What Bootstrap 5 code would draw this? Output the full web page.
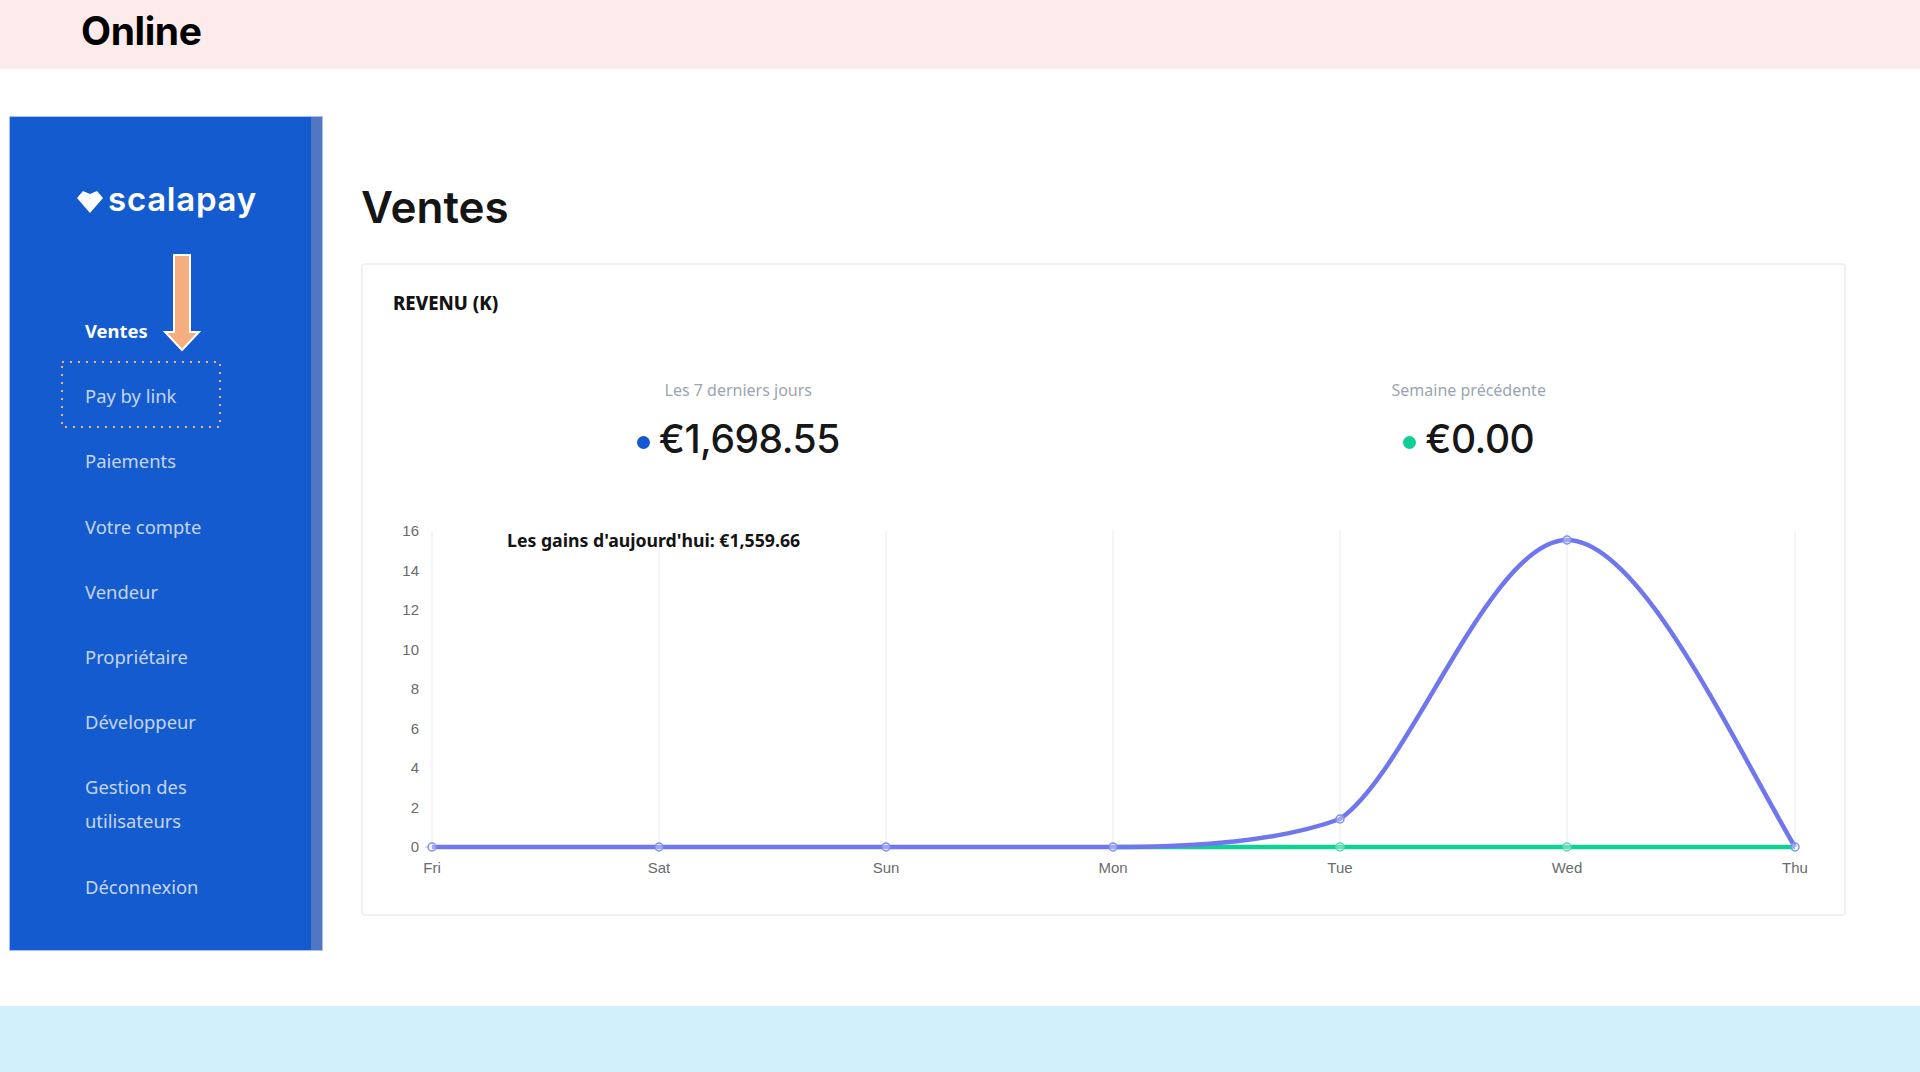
<!DOCTYPE html>
<html lang="fr">
<head>
  <meta charset="UTF-8">
  <title>Online - Ventes</title>
  <link href="https://cdn.jsdelivr.net/npm/bootstrap@5.3.0/dist/css/bootstrap.min.css" rel="stylesheet">
  <style>
    body { height: 1072px; overflow: hidden; background: #fff; font-family: "Noto Sans", sans-serif; }
    .top-strip { height: 69px; background: #fcebea; padding-left: 81px; font: 700 39px/62px Inter, sans-serif; color: #000; letter-spacing: -0.4px; }
    .bottom-strip { height: 66px; background: #d2f0fc; }
    .page-body { height: 937px; padding: 48px 0 0 10px; }

    .side-panel { position: relative; width: 312px; height: 833px; background: #155bd0; border-right: 11px solid #5277c2; outline: 1px solid #a9c3ee; }
    .brand { height: 182px; padding: 60px 0 0 67px; color: #fff; font: 600 33px/44px Inter, sans-serif; letter-spacing: 0.75px; }
    .brand svg { margin-right: 5px; vertical-align: -2px; }
    .side-nav { list-style: none; margin: 0; padding: 0 0 0 75px; }
    .side-nav a { display: block; padding: 15px 0 16.2px; color: #c6d6f3; font-size: 18.4px; line-height: 34px; text-decoration: none; white-space: nowrap; }
    .side-nav a.current { color: #fff; font-weight: 700; }
    .arrow-note { position: absolute; left: 153px; top: 137px; }
    .box-note { position: absolute; left: 51px; top: 244px; }

    .content-col { padding-left: 39px; width: 1522px; }
    .page-title { margin: 0; padding-top: 60px; height: 146px; font: 600 44px/60px Inter, sans-serif; color: #151515; }
    .chart-card { width: 1485px; height: 653px; border: 2px solid #eef1f5; border-radius: 4px; }
    .card-heading { padding: 24px 0 0 30px; height: 77px; font: 800 18.6px/28px "Noto Sans", sans-serif; color: #141414; }
    .stats-row { margin: 34px 10px 0; height: 140px; }
    .stat-label { color: #9aa5b1; font-size: 16px; line-height: 28px; }
    .stat-value { font: 500 39px/50px Inter, sans-serif; color: #171717; margin-top: 10px; letter-spacing: -0.5px; }
    .stat-dot { display: inline-block; width: 13px; height: 13px; border-radius: 50%; margin-right: 9px; vertical-align: 4px; }
    .dot-blue { background: #1358d2; }
    .dot-green { background: #0fcf97; }
    .chart-svg { display: block; flex-shrink: 0; }
    .chart-svg text { font-family: "Liberation Sans", Arial, sans-serif; font-size: 15px; fill: #6b6b6b; }
    .chart-svg .today-note { font-family: "Noto Sans", sans-serif; font-size: 17.7px; font-weight: 700; fill: #141414; }
  </style>
</head>
<body class="d-flex flex-column">

<div class="top-strip">Online</div>

<div class="page-body d-flex">
  <!-- Sidebar -->
  <aside class="side-panel flex-shrink-0">
    <div class="brand">
      <svg width="26" height="23" viewBox="0 0 26 23"><path d="M0 8 L6 1 L13 4 L20 1 L26 8 L13 23 Z" fill="#fff"/></svg>scalapay
    </div>
    <ul class="side-nav">
      <li><a class="current" href="#">Ventes</a></li>
      <li><a href="#">Pay by link</a></li>
      <li><a href="#">Paiements</a></li>
      <li><a href="#">Votre compte</a></li>
      <li><a href="#">Vendeur</a></li>
      <li><a href="#">Propriétaire</a></li>
      <li><a href="#">Développeur</a></li>
      <li><a href="#">Gestion des<br>utilisateurs</a></li>
      <li><a href="#">Déconnexion</a></li>
    </ul>
    <!-- annotations over the menu -->
    <svg class="arrow-note" width="38" height="98" viewBox="0 0 38 98">
      <path d="M11 1 H27 V78 H36 L19 96 L2 78 H11 Z" fill="#f4ae80" stroke="#fff" stroke-width="2"/>
    </svg>
    <svg class="box-note" width="160" height="67" viewBox="0 0 160 67">
      <rect x="1" y="1" width="158" height="65" fill="none" stroke="#f4ae80" stroke-width="2" stroke-dasharray="2 6"/>
    </svg>
  </aside>

  <!-- Main -->
  <main class="content-col">
    <h1 class="page-title">Ventes</h1>
    <div class="card chart-card">
      <div class="card-heading">REVENU (K)</div>
      <div class="row g-0 stats-row text-center">
        <div class="col-6">
          <div class="stat-label">Les 7 derniers jours</div>
          <div class="stat-value"><span class="stat-dot dot-blue"></span>€1,698.55</div>
        </div>
        <div class="col-6">
          <div class="stat-label">Semaine précédente</div>
          <div class="stat-value"><span class="stat-dot dot-green"></span>€0.00</div>
        </div>
      </div>
      <!-- viewBox is in page coordinates -->
      <svg class="chart-svg" width="1479" height="390" viewBox="363 515 1479 390">
        <g stroke="#f1f2f5" stroke-width="1.5">
          <path d="M432 530V846M659 530V846M886 530V846M1113 530V846M1340 530V846M1567 530V846M1795 530V846"/>
        </g>
        <path d="M425 846H432" stroke="#ccc"/>
        <g text-anchor="end">
          <text x="419" y="535">16</text>
          <text x="419" y="575">14</text>
          <text x="419" y="614">12</text>
          <text x="419" y="654">10</text>
          <text x="419" y="693">8</text>
          <text x="419" y="733">6</text>
          <text x="419" y="772">4</text>
          <text x="419" y="812">2</text>
          <text x="419" y="851">0</text>
        </g>
        <g text-anchor="middle">
          <text x="432" y="872">Fri</text>
          <text x="659" y="872">Sat</text>
          <text x="886" y="872">Sun</text>
          <text x="1113" y="872">Mon</text>
          <text x="1340" y="872">Tue</text>
          <text x="1567" y="872">Wed</text>
          <text x="1795" y="872">Thu</text>
        </g>
        <text class="today-note" x="507" y="546">Les gains d'aujourd'hui: €1,559.66</text>
        <path d="M1113 846H1795" fill="none" stroke="#0ed195" stroke-width="4.5"/>
        <g fill="#fff" fill-opacity=".35" stroke="#55dcae" stroke-width="1.5">
          <circle cx="1340" cy="846" r="4"/>
          <circle cx="1567" cy="846" r="4"/>
        </g>
        <path d="M432 846H1113C1200 846 1280 840 1340 818C1410 770 1490 539 1567 539C1640 539 1730 735 1795 846" fill="none" stroke="#6f76ee" stroke-width="4.5"/>
        <g fill="#fff" fill-opacity=".35" stroke="#7d90f2" stroke-width="1.5">
          <circle cx="432" cy="846" r="4"/>
          <circle cx="659" cy="846" r="4"/>
          <circle cx="886" cy="846" r="4"/>
          <circle cx="1113" cy="846" r="4"/>
          <circle cx="1340" cy="818" r="4"/>
          <circle cx="1567" cy="539" r="4"/>
          <circle cx="1795" cy="846" r="4"/>
        </g>
      </svg>
    </div>
  </main>
</div>

<div class="bottom-strip mt-auto"></div>

<script src="https://cdn.jsdelivr.net/npm/bootstrap@5.3.0/dist/js/bootstrap.bundle.min.js"></script>
</body>
</html>
